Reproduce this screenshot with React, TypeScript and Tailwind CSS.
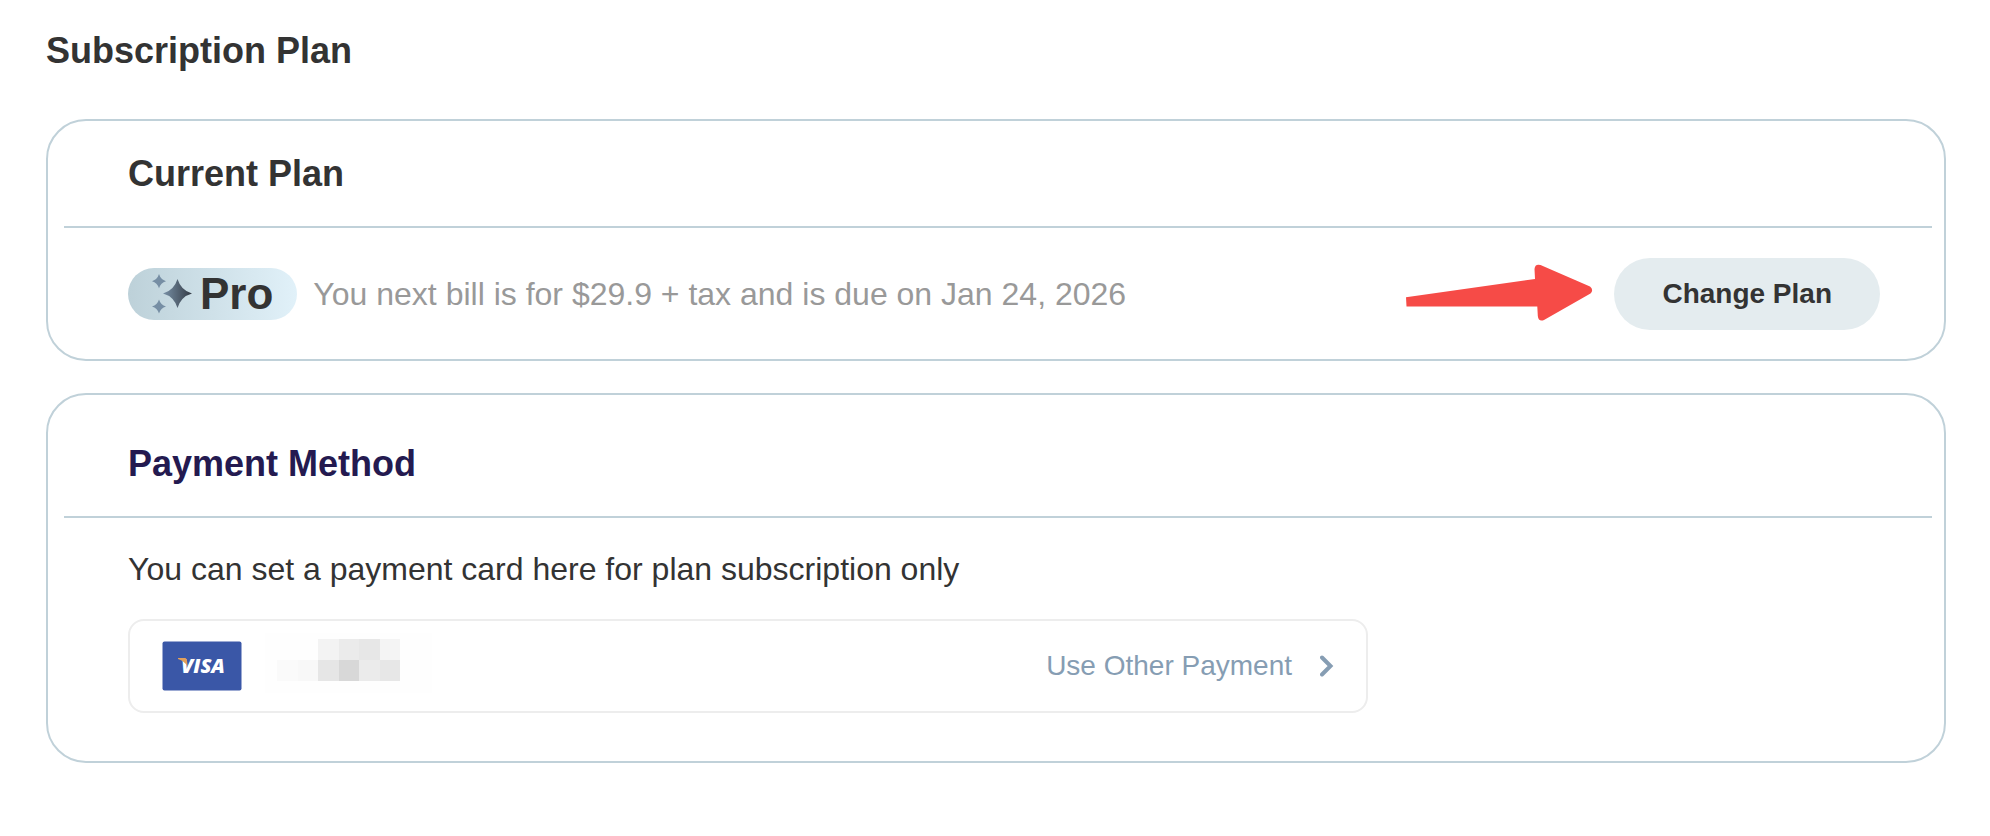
const mosaic = [
  ["bg-transparent", "bg-transparent", "bg-[#f3f3f3]", "bg-[#ebebeb]", "bg-[#e7e7e7]", "bg-[#f4f4f4]"],
  ["bg-[#fafafa]", "bg-[#f8f8f8]", "bg-[#e6e6e6]", "bg-[#d8d8d8]", "bg-[#ebebeb]", "bg-[#e7e7e7]"],
];

function Sparkles() {
  return (
    <svg width="40" height="40" viewBox="0 0 40 40" aria-hidden="true">
      <defs>
        <linearGradient id="spark" x1="0" x2="1" y1="0" y2="0">
          <stop offset="0" stopColor="#7890a6" />
          <stop offset="1" stopColor="#333a44" />
        </linearGradient>
      </defs>
      <path d="M25.500 5Q29 16.500 40 19.500Q29 22.500 25.500 34Q22 22.500 11 19.500Q22 16.500 25.500 5Z" fill="url(#spark)" />
      <path d="M7 0Q8.700 5.500 14 7.200Q8.700 8.900 7 14.200Q5.300 8.900 0 7.200Q5.300 5.500 7 0Z" fill="#768ea4" />
      <path d="M7 25.500Q8.700 31 14 32.500Q8.700 34 7 39.500Q5.300 34 0 32.500Q5.300 31 7 25.500Z" fill="#768ea4" />
    </svg>
  );
}

function Arrow() {
  return (
    <svg width="188" height="60" viewBox="0 0 188 60" aria-hidden="true">
      <path
        d="M0 33.300L129 15L128.500 5Q129 -0.500 134.500 1L184 22.500Q188 26 184.500 29.500L138 56Q132.500 58 131.800 52L131.300 42.500H0.500Z"
        fill="#f64b47"
      />
    </svg>
  );
}

function Visa() {
  return (
    <svg width="80" height="50" viewBox="0 0 80 50" role="img" aria-label="Visa">
      <rect x="0.500" y="0.500" width="79" height="49" rx="2" fill="#3a57a7" />
      <text
        x="19"
        y="32"
        fill="#fff"
        fontFamily="'Open Sans', sans-serif"
        fontSize="20"
        fontWeight="800"
        fontStyle="italic"
      >
        VISA
      </text>
      <path d="M16 17H23.500Q24.500 17.500 25 20L25.700 25.500Q22.500 20 16 18Z" fill="#e2a05a" />
    </svg>
  );
}

export default function App() {
  return (
    <main className="bg-white px-[46px] pr-[44px] pt-[30px] pb-10 font-['Liberation_Sans',Arial,sans-serif] text-[#333]">
      <h1 className="text-4xl leading-[42px] font-bold">Subscription Plan</h1>

      <section className="mt-[47px] rounded-[40px] border-2 border-[#c0d1d9]">
        <h2 className="mr-3 ml-4 border-b-2 border-[#c0d1d9] pt-8 pb-[31px] pl-16 text-4xl leading-[42px] font-bold">
          Current Plan
        </h2>
        <div className="flex items-center pt-[30px] pr-16 pb-[29px] pl-20">
          <span className="flex h-[52px] items-center gap-2 rounded-full bg-linear-to-r from-[#bdd1d9] to-[#e1f1f9] px-6 text-[44px] leading-[52px] font-bold">
            <Sparkles />
            Pro
          </span>
          <p className="ml-4 text-[32px] leading-10 text-[#999]">
            You next bill is for $29.9 + tax and is due on Jan 24, 2026
          </p>
          <div className="mr-5 ml-auto">
            <Arrow />
          </div>
          <button type="button" className="h-[72px] rounded-full bg-[#e4ecef] px-12 text-[28px] leading-8 font-bold">
            Change Plan
          </button>
        </div>
      </section>

      <section className="mt-8 rounded-[40px] border-2 border-[#c0d1d9]">
        <h2 className="mr-3 ml-4 border-b-2 border-[#c0d1d9] pt-12 pb-[31px] pl-16 text-4xl leading-[42px] font-bold text-[#241a50]">
          Payment Method
        </h2>
        <div className="pt-[31px] pr-16 pb-12 pl-20">
          <p className="text-[32px] leading-10">You can set a payment card here for plan subscription only</p>
          <div className="mt-[30px] flex h-[94px] max-w-[1240px] items-center rounded-2xl border-2 border-[#ededed] px-8">
            <Visa />
            <div className="mt-3 ml-[23px] self-start bg-[#fefefe] pt-1.5 pr-8 pb-3 pl-3" aria-hidden="true">
              <div className="grid w-[123px] grid-cols-6">
                {mosaic.flat().map((tone, i) => (
                  <span key={i} className={`h-[21px] ${tone}`} />
                ))}
              </div>
            </div>
            <button type="button" className="ml-auto flex items-center gap-7 text-[28px] leading-8 text-[#869db3]">
              Use Other Payment
              <svg width="14" height="22" viewBox="0 0 14 22" fill="none" aria-hidden="true">
                <path d="M2 2.500L10.500 11L2 19.500" stroke="#869db3" strokeWidth="4" strokeLinecap="round" />
              </svg>
            </button>
          </div>
        </div>
      </section>
    </main>
  );
}
